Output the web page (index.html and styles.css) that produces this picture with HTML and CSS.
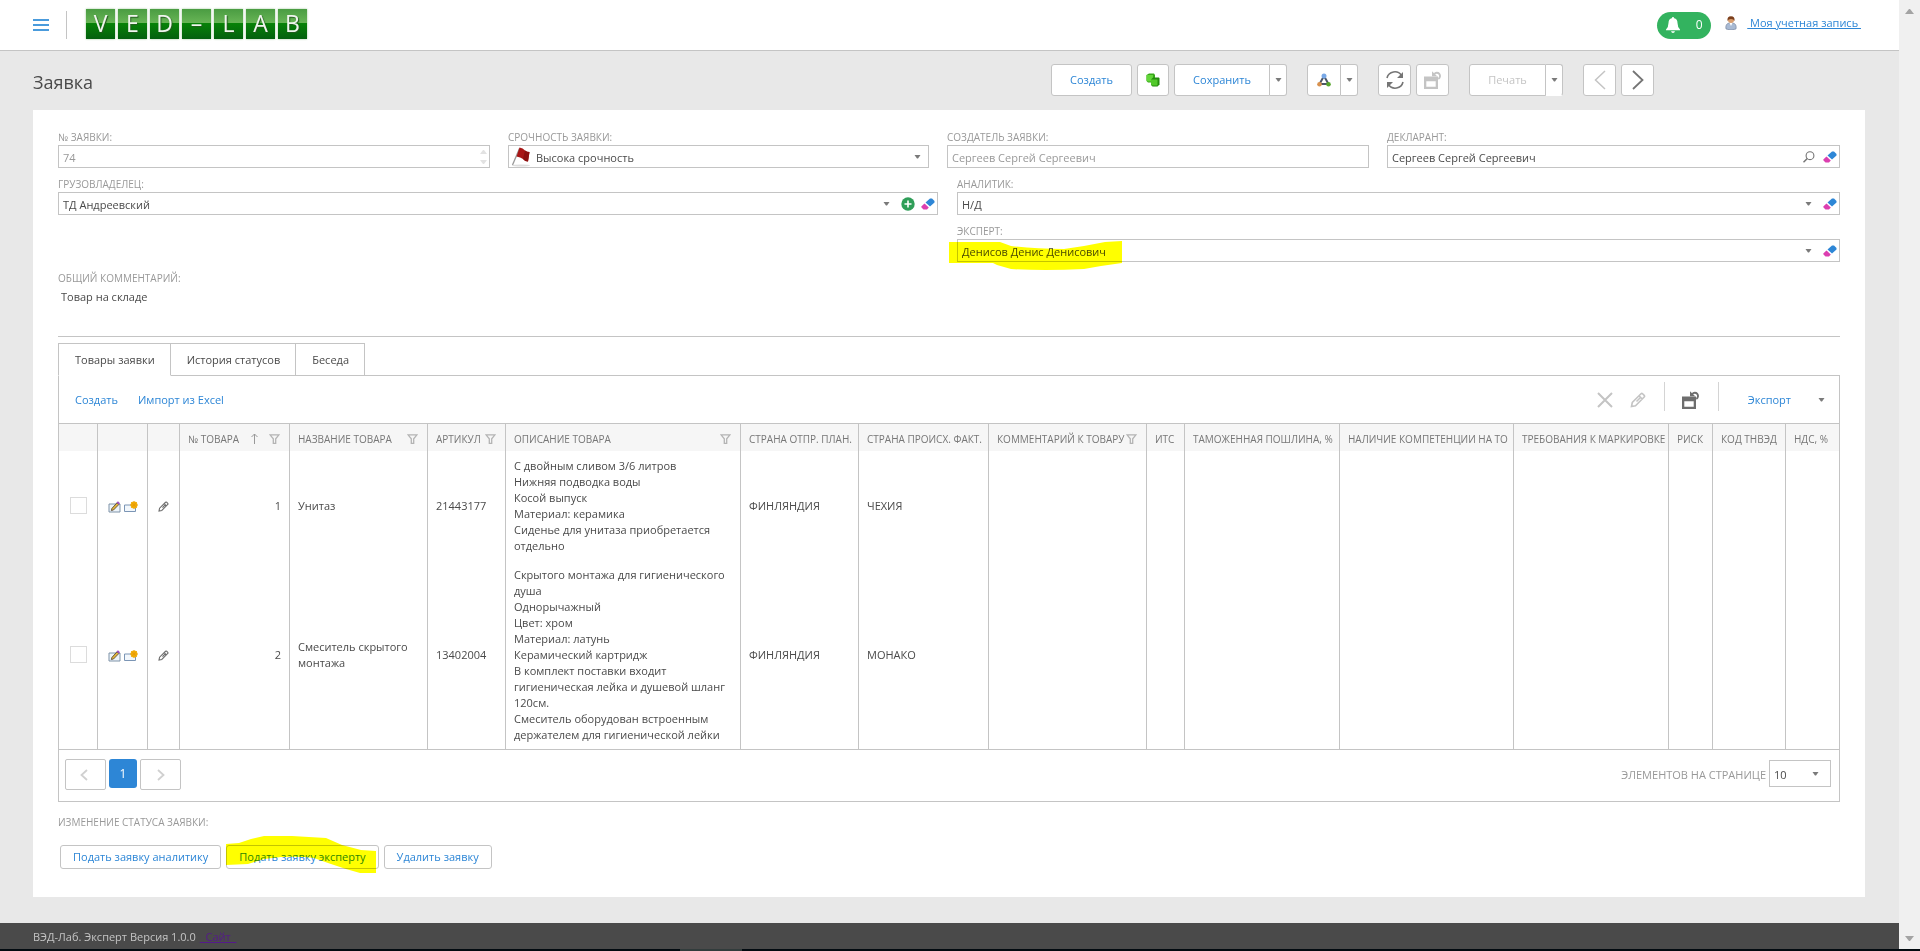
FILE: index.html
```html
<!DOCTYPE html>
<html lang="ru">
<head>
<meta charset="utf-8">
<title>Заявка</title>
<link rel="stylesheet" href="styles.css">
</head>
<body>
<svg class="defs" aria-hidden="true">
  <symbol id="arrow" viewBox="0 0 7 4"><path d="M.5 0h6L4 3.500H3z" fill="#7a7a7a"/></symbol>
  <symbol id="eraser" viewBox="0 0 14 12"><path d="M9 .5h2L13.500 3v1.500L9 8.500L4.500 4.500z" fill="#2d86d6"/><path d="M3.500 5.500L7.800 9.400L6 11.500H2.500L.3 9.300V8.500z" fill="#dc3fb0"/></symbol>
  <symbol id="funnel" viewBox="0 0 11 10"><path d="M1 .8h9L6.700 4.800V9.300H4.300V4.800z" fill="none" stroke="#b4b4b4" stroke-width="1.300"/></symbol>
  <symbol id="pencil" viewBox="0 0 16 16"><path d="M1.500 14.500l.8-4L11 1.800q.8-.7 1.600 0l1.600 1.600q.8.800 0 1.600L5.500 13.700zM9 3.800L12.200 7M6.500 9.500L10.500 5.500" fill="none" stroke="currentColor" stroke-width="1.600"/></symbol>
  <symbol id="window" viewBox="0 0 18 18"><path d="M0 5.500h14V18H0zM2.300 10.300v5.400h9.400v-5.400z" fill="currentColor" fill-rule="evenodd"/><path d="M8 .2v5h5.200z" fill="currentColor"/><path d="M10.300 3A3.200 3.200 0 1 1 14.300 7.800" fill="none" stroke="currentColor" stroke-width="1.900"/></symbol>
  <symbol id="editrow" viewBox="0 0 13 12"><path d="M1 3h11v8H1z" fill="#eef4fa" stroke="#7f93a8"/><path d="M3.300 9.500L4 7.300L9 1.800l1.800 1.800L5.500 9z" fill="#e2b33c" stroke="#4b4033" stroke-width=".8"/><path d="M8.500 1.500L10 .3l2 1.900-1.300 1.300z" fill="#a04fc0"/></symbol>
  <symbol id="newrow" viewBox="0 0 14 12"><path d="M.5 4h11v6.500H.5z" fill="#f2f7fc" stroke="#7b95b5"/><circle cx="10" cy="4" r="3.400" fill="#f5b40a"/><path d="M10 0v8M6 4h8M7.200 1.200l5.600 5.600M12.800 1.200L7.200 6.800" stroke="#e79b05" stroke-width=".8"/></symbol>
</svg>
<div class="window">
  <div class="page">
    <header class="header">
      <button class="plain" aria-label="Меню"><svg width="16" height="14" viewBox="0 0 16 14"><path d="M0 2h16M0 7h16M0 12h16" stroke="#4a9bdc" stroke-width="2"/></svg></button>
      <span class="header-rule"></span>
      <div class="logo"><span>V</span><span>E</span><span>D</span><span>–</span><span>L</span><span>A</span><span>B</span></div>
      <button class="bell"><svg width="14" height="16" viewBox="0 0 14 16"><path d="M7 0q1 0 1.200 1.200Q11.500 2 11.500 6q0 4 2.500 6.500v.8H0v-.8Q2.500 10 2.500 6q0-4 3.300-4.800Q6 0 7 0zM5 14.200h4Q8.500 16 7 16T5 14.200z" fill="#fff"/></svg><span>0</span></button>
      <a class="account" href="#"><svg width="12" height="14" viewBox="0 0 12 14"><path d="M1 13q-1-5 3-6h4q4 1 3 6-5 2-10 0z" fill="#a9bad3" stroke="#71809a" stroke-width=".6"/><path d="M4.500 7L6 10l1.500-3z" fill="#fff"/><circle cx="6" cy="4" r="3" fill="#d99f70"/><path d="M2.500 5Q1.800.2 6 .2T9.500 5Q8.800 3 6 3T2.500 5z" fill="#7c3f1c"/></svg><span>&nbsp;Моя учетная запись&nbsp;</span></a>
    </header>

    <div class="titlebar">
      <h1>Заявка</h1>
      <div class="actions">
        <button class="btn wide">Создать</button>
        <button class="btn sq copy" aria-label="Копировать"><svg width="14" height="14" viewBox="0 0 14 14"><path d="M.5 2L3 .5h5L9 2v6l-1.500 1.500H2L.5 8z" fill="#36a818"/><path d="M.5 2h6.500v6.500H2L.5 7.500z" fill="#63d63a"/><path d="M5 6.500L7 4.500h6l.5 1v6L11.500 13.500H6.500L5 12z" fill="#258c0e"/><path d="M5 6.500h6.500v6H6.500L5 11.500z" fill="#52c92a"/></svg></button>
        <div class="split"><button class="btn save">Сохранить</button><button class="btn drop" aria-label="Ещё"><svg width="7" height="4"><use href="#arrow"/></svg></button></div>
        <div class="split group"><button class="btn sq links" aria-label="Связи"><svg width="14" height="14" viewBox="0 0 14 14"><path d="M7 3L2.500 11h9z" fill="none" stroke="#4c5666" stroke-width="2"/><circle cx="7" cy="3" r="2.500" fill="#78a8e6"/><circle cx="2.500" cy="11.200" r="2.300" fill="#d8914e"/><circle cx="11.500" cy="11.200" r="2.300" fill="#57a62c"/></svg></button><button class="btn drop" aria-label="Ещё"><svg width="7" height="4"><use href="#arrow"/></svg></button></div>
        <button class="btn sq group" aria-label="Обновить"><svg width="18" height="18" viewBox="0 0 18 18"><path d="M1 7A8 8 0 0 1 15.500 4.500M17 11A8 8 0 0 1 2.500 13.500" fill="none" stroke="#757575" stroke-width="1.600"/><path d="M17 1v6h-6zM1 17v-6h6z" fill="#757575"/></svg></button>
        <button class="btn sq off" aria-label="Окно" disabled><svg width="18" height="18"><use href="#window"/></svg></button>
        <div class="split group"><button class="btn print" disabled>Печать</button><button class="btn drop bare" aria-label="Ещё"><svg width="7" height="4"><use href="#arrow"/></svg></button></div>
        <button class="btn sq group off" aria-label="Назад" disabled><svg width="12" height="20" viewBox="0 0 12 20"><path d="M11 1L1.500 10L11 19" fill="none" stroke="currentColor" stroke-width="1.500"/></svg></button>
        <button class="btn sq dark" aria-label="Вперёд"><svg width="12" height="20" viewBox="0 0 12 20"><path d="M1 1l9.500 9L1 19" fill="none" stroke="currentColor" stroke-width="1.800"/></svg></button>
      </div>
    </div>

    <main class="panel">
      <div class="row row-four">
        <div><label class="cap" for="num">№ заявки:</label><div class="box"><input id="num" value="74" disabled><svg class="spin" width="7" height="14" viewBox="0 0 7 14"><path d="M0 4l3-4h1l3 4zM0 10h7l-3 4H3z" fill="#e2e2e2"/></svg></div></div>
        <div><label class="cap" for="urg">Срочность заявки:</label><div class="box"><svg class="flag" width="20" height="20" viewBox="0 0 20 20"><ellipse cx="10" cy="18.500" rx="9" ry="1" fill="#ddd"/><path d="M1.500 18L8.500 1.500" stroke="#999" stroke-width="1.300"/><path d="M8.500.5Q12 1 14 3.500q2 1.500 4.500 1.500L17 14.500q-3 0-5-2.500-2.500-2-6.500-2.500z" fill="#a81616"/><path d="M14 3.500q2 1.500 4.500 1.500L17 14.500q-3 0-5-2.500z" fill="#8c0f0f"/></svg><select id="urg"><option>Высока срочность</option></select><svg class="caret" width="7" height="4"><use href="#arrow"/></svg></div></div>
        <div><label class="cap" for="creator">Создатель заявки:</label><div class="box"><input id="creator" value="Сергеев Сергей Сергеевич" disabled></div></div>
        <div><label class="cap" for="decl">Декларант:</label><div class="box"><input id="decl" value="Сергеев Сергей Сергеевич"><svg class="lens" width="12" height="12" viewBox="0 0 12 12"><circle cx="7" cy="4.700" r="3.900" fill="none" stroke="#757575" stroke-width="1.100"/><path d="M4.300 7.500L.5 11.300" stroke="#757575" stroke-width="1.500"/></svg><svg class="ico" width="14" height="12"><use href="#eraser"/></svg></div></div>
      </div>
      <div class="row row-two">
        <div><label class="cap" for="owner">Грузовладелец:</label><div class="box"><select id="owner"><option>ТД Андреевский</option></select><svg class="caret" width="7" height="4"><use href="#arrow"/></svg><svg class="ico" width="14" height="14" viewBox="0 0 14 14"><circle cx="7" cy="7" r="6.700" fill="#2f9e58"/><path d="M7 3.500v7M3.500 7h7" stroke="#fff" stroke-width="1.600"/></svg><svg class="ico" width="14" height="12"><use href="#eraser"/></svg></div></div>
        <div><label class="cap" for="analyst">Аналитик:</label><div class="box"><select id="analyst"><option>Н/Д</option></select><svg class="caret" width="7" height="4"><use href="#arrow"/></svg><svg class="ico" width="14" height="12"><use href="#eraser"/></svg></div></div>
        <div class="second"><label class="cap" for="expert">Эксперт:</label><div class="box"><select id="expert"><option>Денисов Денис Денисович</option></select><svg class="caret" width="7" height="4"><use href="#arrow"/></svg><svg class="ico" width="14" height="12"><use href="#eraser"/></svg><svg class="mark mark-expert" width="173" height="29" viewBox="0 0 173 29"><path d="M0 1H51L62 5Q85 8 115 8L135 5L156 1L173 0V22L152 25L135 28Q95 30 62 28L48 24L44 22H0z" fill="#ff0"/></svg></div></div>
      </div>
      <span class="cap">Общий комментарий:</span>
      <p class="comment">Товар на складе</p>

      <div class="tabs" role="tablist">
        <button class="tab active" role="tab">Товары заявки</button><button class="tab" role="tab">История статусов</button><button class="tab" role="tab">Беседа</button><span class="tab-rest"></span>
      </div>
      <section class="grid">
        <div class="grid-bar">
          <button class="link">Создать</button><button class="link">Импорт из Excel</button>
          <span class="grow"></span>
          <button class="plain off" aria-label="Удалить" disabled><svg width="16" height="16" viewBox="0 0 16 16"><path d="M1 1l14 14M15 1L1 15" stroke="currentColor" stroke-width="2"/></svg></button>
          <button class="plain off edit" aria-label="Изменить" disabled><svg width="16" height="16"><use href="#pencil"/></svg></button>
          <span class="vr"></span>
          <button class="plain dark" aria-label="Вид"><svg width="18" height="18"><use href="#window"/></svg></button>
          <span class="vr"></span>
          <button class="link export">Экспорт</button>
          <button class="plain" aria-label="Форматы"><svg width="7" height="4"><use href="#arrow"/></svg></button>
        </div>
        <table>
          <colgroup><col class="c1"><col class="c2"><col class="c3"><col class="c4"><col class="c5"><col class="c6"><col class="c7"><col class="c8"><col class="c9"><col class="c10"><col class="c11"><col class="c12"><col class="c13"><col class="c14"><col class="c15"><col class="c16"><col class="c17"></colgroup>
          <thead><tr>
            <th></th><th></th><th></th>
            <th><div class="th"><span>№ товара</span><svg class="sort" width="7" height="11" viewBox="0 0 7 11"><path d="M3.500 11V1M.5 4l3-3 3 3" fill="none" stroke="#999"/></svg><svg width="11" height="10"><use href="#funnel"/></svg></div></th>
            <th><div class="th"><span>Название товара</span><svg width="11" height="10"><use href="#funnel"/></svg></div></th>
            <th><div class="th"><span>Артикул</span><svg width="11" height="10"><use href="#funnel"/></svg></div></th>
            <th><div class="th"><span>Описание товара</span><svg width="11" height="10"><use href="#funnel"/></svg></div></th>
            <th>Страна отпр. план.</th><th>Страна происх. факт.</th>
            <th><div class="th"><span>Комментарий к товару</span><svg width="11" height="10"><use href="#funnel"/></svg></div></th>
            <th>ИТС</th><th>Таможенная пошлина, %</th><th>Наличие компетенции на ТО</th><th>Требования к маркировке</th><th>Риск</th><th>Код ТНВЭД</th><th>НДС, %</th>
          </tr></thead>
          <tbody>
            <tr>
              <td class="mid"><input type="checkbox" aria-label="Выбрать 1"></td>
              <td class="mid"><div class="pair"><svg width="13" height="12"><use href="#editrow"/></svg><svg width="14" height="12"><use href="#newrow"/></svg></div></td>
              <td class="mid"><div class="pair dark"><svg width="11" height="11"><use href="#pencil"/></svg></div></td>
              <td class="num">1</td><td>Унитаз</td><td>21443177</td>
              <td>С двойным сливом 3/6 литров<br>Нижняя подводка воды<br>Косой выпуск<br>Материал: керамика<br>Сиденье для унитаза приобретается отдельно</td>
              <td>ФИНЛЯНДИЯ</td><td>ЧЕХИЯ</td><td></td><td></td><td></td><td></td><td></td><td></td><td></td><td></td>
            </tr>
            <tr>
              <td class="mid"><input type="checkbox" aria-label="Выбрать 2"></td>
              <td class="mid"><div class="pair"><svg width="13" height="12"><use href="#editrow"/></svg><svg width="14" height="12"><use href="#newrow"/></svg></div></td>
              <td class="mid"><div class="pair dark"><svg width="11" height="11"><use href="#pencil"/></svg></div></td>
              <td class="num">2</td><td>Смеситель скрытого монтажа</td><td>13402004</td>
              <td>Скрытого монтажа для гигиенического душа<br>Однорычажный<br>Цвет: хром<br>Материал: латунь<br>Керамический картридж<br>В комплект поставки входит гигиеническая лейка и душевой шланг 120см.<br>Смеситель оборудован встроенным держателем для гигиенической лейки</td>
              <td>ФИНЛЯНДИЯ</td><td>МОНАКО</td><td></td><td></td><td></td><td></td><td></td><td></td><td></td><td></td>
            </tr>
          </tbody>
        </table>
        <div class="pager">
          <button class="pg prev" aria-label="Предыдущая" disabled><svg width="8" height="12" viewBox="0 0 8 12"><path d="M7 1L1.500 6L7 11" fill="none" stroke="#d0d0d0" stroke-width="1.800"/></svg></button>
          <button class="pg current">1</button>
          <button class="pg" aria-label="Следующая" disabled><svg width="8" height="12" viewBox="0 0 8 12"><path d="M1 1l5.500 5L1 11" fill="none" stroke="#d0d0d0" stroke-width="1.800"/></svg></button>
          <span class="grow"></span>
          <label class="size-cap" for="size">Элементов на странице</label>
          <div class="box size"><select id="size"><option>10</option></select><svg class="caret" width="7" height="4"><use href="#arrow"/></svg></div>
        </div>
      </section>

      <span class="cap status-cap">Изменение статуса заявки:</span>
      <div class="status">
        <button class="btn sm">Подать заявку аналитику</button>
        <div class="marked"><button class="btn sm">Подать заявку эксперту</button><svg class="mark mark-status" width="150" height="37" viewBox="0 0 150 37"><path d="M0 8L13 7L25 3L38 0H66L100 2L116 9L135 14L150 15V37H134L120 33L102 27L88 22Q75 20 55 21L38 23L22 28L0 29z" fill="#ff0"/></svg></div>
        <button class="btn sm">Удалить заявку</button>
      </div>
    </main>
    <footer class="footer"><span>ВЭД-Лаб. Эксперт Версия 1.0.0</span><a href="#">&nbsp; Сайт &nbsp;</a></footer>
  </div>
  <div class="scroll"><svg width="9" height="5" viewBox="0 0 9 5"><path d="M0 5l4-5h1l4 5z" fill="#a3a3a3"/></svg><svg width="9" height="5" viewBox="0 0 9 5"><path d="M0 0h9L5 5H4z" fill="#a3a3a3"/></svg></div>
</div>
<div class="edge"><span></span></div>
</body>
</html>
```
FILE: styles.css
```css
* { box-sizing: border-box; }
body {
  margin: 0;
  min-height: 100vh;
  display: flex;
  flex-direction: column;
  background: #e8e8e8;
  color: #4a4a4a;
  font: 11px/16px "Open Sans", "Noto Sans", sans-serif;
}
svg { display: block; flex: none; }
.defs { position: absolute; width: 0; height: 0; }
button, input, select { font: inherit; color: inherit; }
button { padding: 0; background: none; border: 0; display: flex; align-items: center; justify-content: center; }
.window { flex: 1; display: flex; }
.page { flex: 1; min-width: 0; display: flex; flex-direction: column; }
.scroll {
  width: 21px;
  background: #f0f0f0;
  display: flex;
  flex-direction: column;
  align-items: center;
  justify-content: space-between;
  padding: 9px 0 8px;
}
.edge { height: 3px; background: #020a10; display: flex; padding-left: 680px; }
.edge span { width: 62px; background: #323c3c; }
.grow { flex: 1; }
.off { color: #c4c4c4; }
.dark { color: #6e6e6e; }

.header { height: 51px; background: #fff; border-bottom: 1px solid #c4c4c4; display: flex; align-items: center; padding: 0 38px 0 33px; }
.header-rule { width: 1px; height: 28px; background: #c4c4c4; margin: 0 19px 0 17px; }
.logo { display: flex; gap: 3px; margin-right: auto; padding-bottom: 2px; }
.logo span {
  width: 29px;
  height: 30px;
  background: linear-gradient(#4a9c42, #67b455 45%, #078207 48%, #04600f);
  color: #f0f5ee;
  font: 23px/28px "Open Sans", sans-serif;
  text-align: center;
  box-shadow: 0 0 2px #9fc79a;
  text-shadow: 1px 1px 1px #245c20;
}
.bell { height: 27px; width: 54px; border-radius: 14px; background: #33b35f; color: #fff; gap: 16px; margin-right: 14px; font-size: 12px; }
.account { display: flex; align-items: center; gap: 10px; color: #2d86d6; text-decoration: none; padding-bottom: 4px; }
.account span { text-decoration: underline; }

.titlebar { height: 59px; padding: 0 245px 0 33px; display: flex; align-items: center; justify-content: space-between; }
h1 { margin: 0; font-size: 18px; line-height: 24px; font-weight: 400; padding-top: 2px; }
.actions { display: flex; gap: 5px; padding-bottom: 1px; }
.group { margin-left: 15px; }
.btn { height: 32px; background: #fff; border: 1px solid #c4c4c4; border-radius: 3px; color: #2d86d6; }
.btn.off, .print { color: #c4c4c4; }
.btn.dark { color: #757575; }
.wide { width: 81px; }
.sq { width: 33px; }
.copy { width: 32px; }
.links { width: 34px; }
.save { width: 96px; }
.print { width: 77px; }
.drop { width: 17px; }
.split { display: flex; }
.split .btn:first-child { border-radius: 3px 0 0 3px; }
.split .drop { border-left: 0; border-radius: 0 3px 3px 0; }
.split .bare { border-bottom-color: #fff; }

.panel { flex: 1; background: #fff; margin: 0 34px 26px 33px; padding: 11px 25px 28px; }
.row { display: grid; }
.row-four { grid-template-columns: 432fr 421fr 422fr 453fr; column-gap: 18px; }
.row-two { grid-template-columns: 880fr 883fr; column-gap: 19px; }
.second { grid-column: 2; }
.cap { display: block; padding-top: 8px; height: 24px; font-size: 10px; text-transform: uppercase; color: #999; }
.box { position: relative; height: 23px; border: 1px solid #c4c4c4; display: flex; align-items: center; background: #fff; }
.box input, .box select { flex: 1; min-width: 0; height: 21px; border: 0; padding: 2px 4px 0; background: none; appearance: none; outline: 0; }
.box input:disabled { color: #999; }
.box .spin { margin-right: 2px; }
.flag { margin: 0 1px 0 2px; }
.caret { margin-right: 7px; }
.lens { margin-right: 4px; }
.ico { margin: 0 2px 0 4px; }
.mark { position: absolute; mix-blend-mode: multiply; pointer-events: none; }
.mark-expert { left: -9px; top: 1px; }
.mark-status { left: 0; top: -9px; }
.comment { margin: 0; padding: 3px 3px 31px; border-bottom: 1px solid #c4c4c4; }

.tabs { display: flex; margin-top: 6px; }
.tab { height: 33px; padding: 0 15px 0 16px; border: 1px solid #c4c4c4; border-left: 0; }
.tab.active { border-left: 1px solid #c4c4c4; border-bottom-color: #fff; }
.tab-rest { flex: 1; border-bottom: 1px solid #c4c4c4; }
.grid { border: 1px solid #c4c4c4; border-top: 0; }
.grid-bar { height: 47px; display: flex; align-items: center; padding: 0 14px 0 16px; }
.link { color: #2d86d6; margin-right: 20px; }
.edit { margin-left: 17px; }
.vr { width: 1px; height: 29px; background: #d4d4d4; margin: 0 17px 6px 18px; }
.export { margin: 0 27px 0 12px; }
table { width: 100%; table-layout: fixed; border-collapse: separate; border-spacing: 0; border-top: 1px solid #c4c4c4; border-bottom: 1px solid #c4c4c4; }
.c1 { width: 39px; } .c2 { width: 50px; } .c3 { width: 32px; } .c4 { width: 110px; }
.c5 { width: 138px; } .c6 { width: 78px; } .c7 { width: 235px; } .c8 { width: 118px; }
.c9 { width: 130px; } .c10 { width: 158px; } .c11 { width: 38px; } .c12 { width: 155px; }
.c13 { width: 174px; } .c14 { width: 155px; } .c15 { width: 44px; } .c16 { width: 73px; } .c17 { width: 53px; }
th { height: 27px; padding: 2px 0 0 8px; background: #f6f6f6; font-size: 10px; font-weight: 400; text-align: left; text-transform: uppercase; color: #777; white-space: nowrap; }
th, td { border-right: 1px solid #c4c4c4; }
th:last-child, td:last-child { border-right: 0; }
.th { display: flex; align-items: center; padding-right: 9px; }
.th span { margin-right: auto; }
.sort { margin-right: 11px; }
td { padding: 7px 8px 6px; vertical-align: middle; }
td.num { text-align: right; }
td.mid { padding: 0; }
.pair { display: flex; justify-content: center; gap: 3px; padding-top: 2px; }
input[type="checkbox"] { display: block; margin: 0 auto; width: 17px; height: 17px; appearance: none; border: 1px solid #dcdcdc; background: #fff; }
.pager { height: 51px; display: flex; align-items: flex-start; padding: 9px 8px 0 6px; gap: 3px; }
.pg { width: 41px; height: 31px; border: 1px solid #c4c4c4; border-radius: 2px; }
.pg.prev { padding-right: 4px; }
.pg.current { width: 28px; height: 29px; border: 0; border-radius: 3px; background: #2d86d6; color: #fff; font-size: 12px; }
.size-cap { text-transform: uppercase; color: #999; padding-top: 8px; }
.size { width: 62px; height: 27px; margin-top: 1px; }
.size .caret { margin-right: 11px; }

.status-cap { padding-top: 12px; height: 43px; }
.status { display: flex; gap: 5px; padding-left: 2px; }
.sm { height: 24px; padding: 0 12px; }
.marked { position: relative; }
.footer { height: 26px; background: #4a4a4a; color: #c4c4c4; padding: 2px 33px 0; display: flex; align-items: center; }
.footer a { color: #551a8b; margin-left: 4px; }
```
